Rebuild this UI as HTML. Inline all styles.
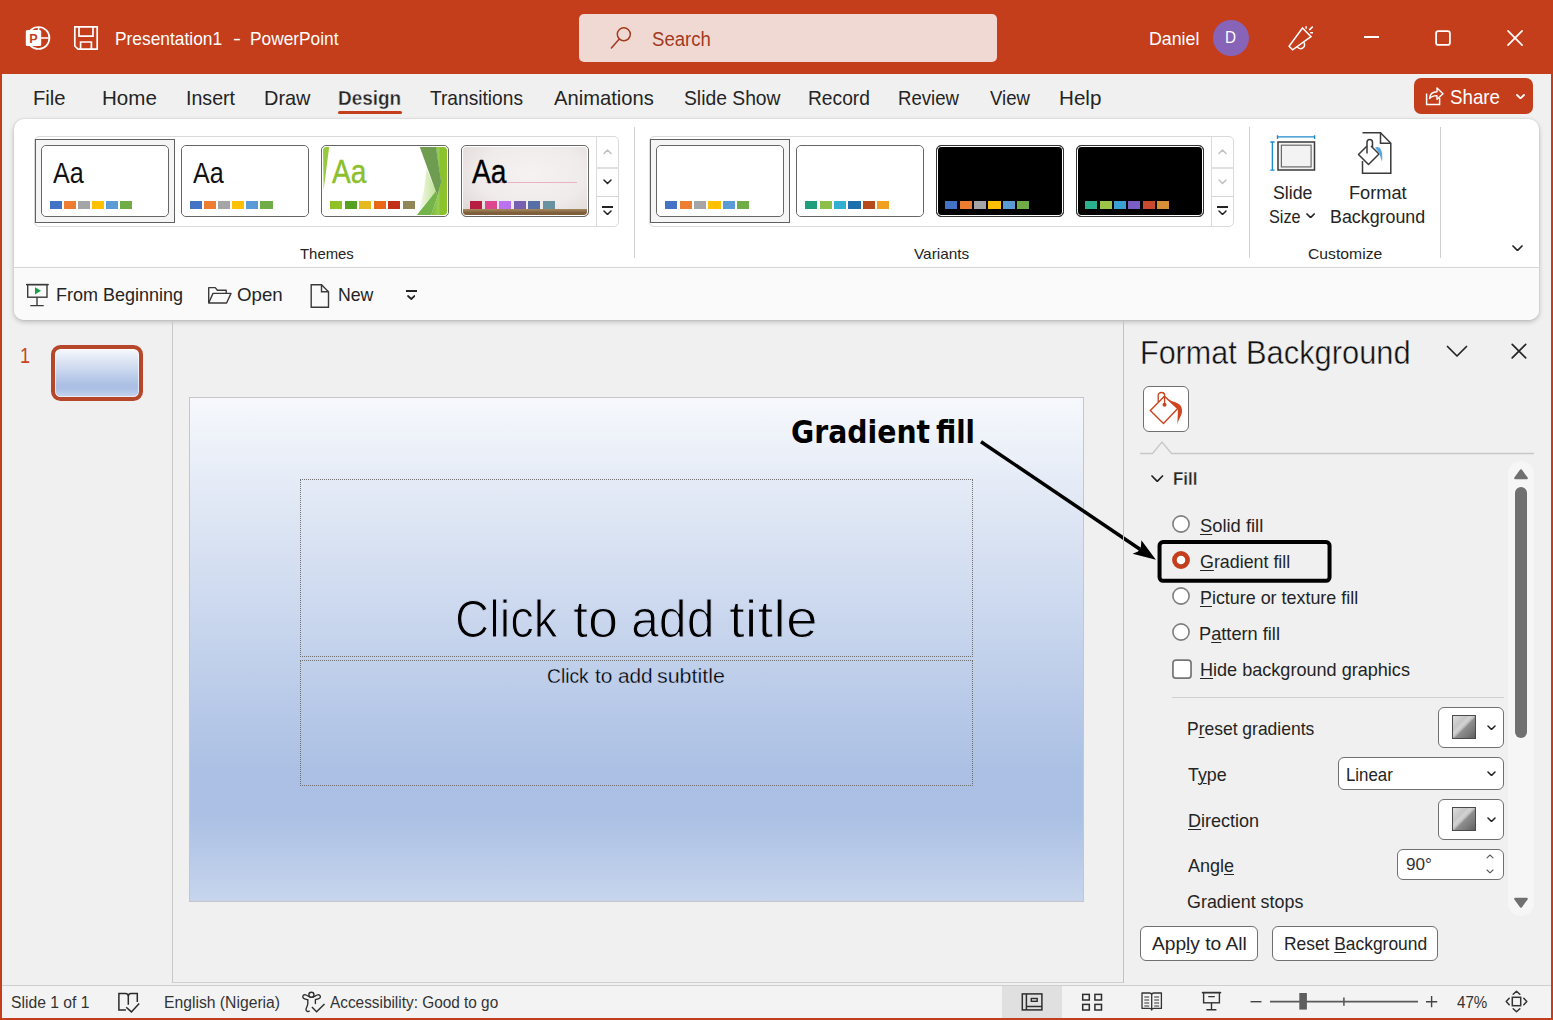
<!DOCTYPE html>
<html lang="en"><head><meta charset="utf-8"><title>Presentation1 - PowerPoint</title>
<style>
html,body{margin:0;padding:0;}
body{width:1553px;height:1020px;overflow:hidden;background:#F0F0F0;font-family:"Liberation Sans",sans-serif;}
#app{position:relative;width:1553px;height:1020px;overflow:hidden;background:#F0F0F0;}
#app div,#app span,#app svg{box-sizing:border-box;}
u{text-decoration:underline;text-decoration-thickness:1px;text-underline-offset:2px;}

</style></head>
<body>
<div id="app">
<div style="position:absolute;left:0px;top:0px;width:1553px;height:74px;background:#C43E1C;"></div>
<svg style="position:absolute;left:25px;top:25px;" width="26" height="26" viewBox="0 0 26 26">
<circle cx="13.4" cy="13" r="11" fill="none" stroke="#fff" stroke-width="1.7"/>
<path d="M13.6 2V13H24.4" fill="none" stroke="#fff" stroke-width="1.7"/>
<rect x="0.8" y="5" width="15.4" height="16" rx="1.6" fill="#fff"/>
<text x="8.5" y="18" font-family="Liberation Sans, sans-serif" font-weight="700" font-size="12.6" text-anchor="middle" fill="#C43E1C">P</text>
</svg>
<svg style="position:absolute;left:73px;top:25px;" width="26" height="26" viewBox="0 0 26 26">
<path d="M1.8 1.8H24.2V24.2H5L1.8 21Z" fill="none" stroke="#fff" stroke-width="1.7" stroke-linejoin="miter"/>
<path d="M6 1.8V11.2H20V1.8" fill="none" stroke="#fff" stroke-width="1.7"/>
<path d="M7.6 24.2V17H18.4V24.2" fill="none" stroke="#fff" stroke-width="1.7"/>
</svg>
<span id="t1" style="position:absolute;left:115.05px;top:30.00px;font:400 18.2px/18.2px 'Liberation Sans', sans-serif;color:#fff;white-space:pre;transform-origin:0 0;transform:scaleX(0.9545);">Presentation1</span>
<span id="t2" style="position:absolute;left:232.70px;top:30.00px;font:400 18.2px/18.2px 'Liberation Sans', sans-serif;color:#fff;white-space:pre;transform-origin:0 0;transform:scaleX(1.3000);">-</span>
<span id="t3" style="position:absolute;left:249.85px;top:30.00px;font:400 18.2px/18.2px 'Liberation Sans', sans-serif;color:#fff;white-space:pre;transform-origin:0 0;transform:scaleX(0.9511);">PowerPoint</span>
<div style="position:absolute;left:579px;top:14px;width:418px;height:48px;background:#F0D9D3;border-radius:5px;"></div>
<svg style="position:absolute;left:606px;top:24px;" width="28" height="28" viewBox="0 0 28 28"><circle cx="17.8" cy="10.3" r="6.5" fill="none" stroke="#A33A1E" stroke-width="1.5"/><path d="M13.3 15.1L5.4 24" stroke="#A33A1E" stroke-width="1.5" stroke-linecap="round"/></svg>
<span id="t4" style="position:absolute;left:651.84px;top:30.00px;font:400 19.4px/19.4px 'Liberation Sans', sans-serif;color:#A33A1E;white-space:pre;transform-origin:0 0;transform:scaleX(0.9593);">Search</span>
<span id="t5" style="position:absolute;left:1149.05px;top:30.00px;font:400 18.7px/18.7px 'Liberation Sans', sans-serif;color:#fff;white-space:pre;transform-origin:0 0;transform:scaleX(0.9510);">Daniel</span>
<div style="position:absolute;left:1213px;top:20px;width:36px;height:36px;background:#8764B8;border-radius:50%;"></div>
<span id="t6" style="position:absolute;left:1224.82px;top:30.00px;font:400 15.6px/15.6px 'Liberation Sans', sans-serif;color:#fff;white-space:pre;transform-origin:0 0;transform:scaleX(0.9800);">D</span>
<svg style="position:absolute;left:1286px;top:24px;" width="30" height="30" viewBox="0 0 30 30">
<path d="M16.5 4L25 12.6L6.6 25.8L3.1 22.2Z" fill="none" stroke="#fff" stroke-width="1.5" stroke-linejoin="miter"/>
<path d="M11.2 22.9A3.9 3.9 0 0 0 17.9 18.3" fill="none" stroke="#fff" stroke-width="1.5"/>
<path d="M20.1 2.3V4.7M23.2 6.1L26.7 2.6M24.2 8.8H27" stroke="#fff" stroke-width="1.5"/>
</svg>
<div style="position:absolute;left:1363.5px;top:36.2px;width:15.5px;height:1.6px;background:#fff;"></div>
<svg style="position:absolute;left:1433px;top:28px;" width="20" height="20" viewBox="0 0 20 20"><rect x="3.1" y="3.1" width="13.8" height="13.8" rx="2.2" fill="none" stroke="#fff" stroke-width="1.8"/></svg>
<svg style="position:absolute;left:1506px;top:29px;" width="18" height="18" viewBox="0 0 18 18"><path d="M2 1.9L16.1 16.1M16.1 1.9L2 16.1" stroke="#fff" stroke-width="1.7" stroke-linecap="round"/></svg>
<span id="t7" style="position:absolute;left:32.66px;top:89.00px;font:400 19.8px/19.8px 'Liberation Sans', sans-serif;color:#242424;white-space:pre;transform-origin:0 0;transform:scaleX(1.0207);">File</span>
<span id="t8" style="position:absolute;left:101.62px;top:89.00px;font:400 19.8px/19.8px 'Liberation Sans', sans-serif;color:#242424;white-space:pre;transform-origin:0 0;transform:scaleX(1.0400);">Home</span>
<span id="t9" style="position:absolute;left:185.72px;top:89.00px;font:400 19.8px/19.8px 'Liberation Sans', sans-serif;color:#242424;white-space:pre;transform-origin:0 0;transform:scaleX(0.9915);">Insert</span>
<span id="t10" style="position:absolute;left:263.99px;top:89.00px;font:400 19.8px/19.8px 'Liberation Sans', sans-serif;color:#242424;white-space:pre;transform-origin:0 0;transform:scaleX(1.0068);">Draw</span>
<span id="t11" style="position:absolute;left:430.30px;top:89.00px;font:400 19.8px/19.8px 'Liberation Sans', sans-serif;color:#242424;white-space:pre;transform-origin:0 0;transform:scaleX(0.9684);">Transitions</span>
<span id="t12" style="position:absolute;left:554.20px;top:89.00px;font:400 19.8px/19.8px 'Liberation Sans', sans-serif;color:#242424;white-space:pre;transform-origin:0 0;transform:scaleX(1.0196);">Animations</span>
<span id="t13" style="position:absolute;left:683.52px;top:89.00px;font:400 19.8px/19.8px 'Liberation Sans', sans-serif;color:#242424;white-space:pre;transform-origin:0 0;transform:scaleX(0.9755);">Slide Show</span>
<span id="t14" style="position:absolute;left:807.86px;top:89.00px;font:400 19.8px/19.8px 'Liberation Sans', sans-serif;color:#242424;white-space:pre;transform-origin:0 0;transform:scaleX(0.9705);">Record</span>
<span id="t15" style="position:absolute;left:897.82px;top:89.00px;font:400 19.8px/19.8px 'Liberation Sans', sans-serif;color:#242424;white-space:pre;transform-origin:0 0;transform:scaleX(0.9397);">Review</span>
<span id="t16" style="position:absolute;left:989.60px;top:89.00px;font:400 19.8px/19.8px 'Liberation Sans', sans-serif;color:#242424;white-space:pre;transform-origin:0 0;transform:scaleX(0.9395);">View</span>
<span id="t17" style="position:absolute;left:1058.62px;top:89.00px;font:400 19.8px/19.8px 'Liberation Sans', sans-serif;color:#242424;white-space:pre;transform-origin:0 0;transform:scaleX(1.0421);">Help</span>
<span id="t18" style="position:absolute;left:338.04px;top:89.00px;font:700 19.8px/19.8px 'Liberation Sans', sans-serif;color:#242424;white-space:pre;transform-origin:0 0;transform:scaleX(0.9578);-webkit-text-stroke:0.35px #F0F0F0;">Design</span>
<div style="position:absolute;left:338px;top:111px;width:64px;height:3px;background:#C43E1C;border-radius:2px;"></div>
<div style="position:absolute;left:1414px;top:78px;width:119px;height:36px;background:#C43E1C;border-radius:7px;"></div>
<svg style="position:absolute;left:1425px;top:86px;" width="20" height="20" viewBox="0 0 20 20">
<path d="M1.6 7.5V18.4H14.6V12" fill="none" stroke="#fff" stroke-width="1.5"/>
<path d="M4.5 12.5C5 7.5 8.5 5.8 12 5.8V2L18 7.8L12 13.2V9.6C9 9.6 6.5 10.2 4.5 12.5Z" fill="none" stroke="#fff" stroke-width="1.4" stroke-linejoin="round"/>
</svg>
<span id="t19" style="position:absolute;left:1449.75px;top:88.00px;font:400 19.8px/19.8px 'Liberation Sans', sans-serif;color:#fff;white-space:pre;transform-origin:0 0;transform:scaleX(0.9471);">Share</span>
<svg style="position:absolute;left:1515.8px;top:93.89999999999999px;" width="9" height="5.4" viewBox="0 0 9 5.4"><path d="M1 1L4.5 4.4L8 1" fill="none" stroke="#fff" stroke-width="1.8" stroke-linecap="round" stroke-linejoin="round"/></svg>
<div style="position:absolute;left:14px;top:119px;width:1525px;height:201px;background:#fff;border-radius:10px;box-shadow:0 2px 5px rgba(0,0,0,0.22),0 0 2px rgba(0,0,0,0.12);overflow:hidden;"><div style="position:absolute;left:0;top:148px;width:1525px;height:53px;background:#FAFAFA;border-top:1px solid #D6D6D6;"></div></div>
<div style="position:absolute;left:34px;top:136px;width:584.5px;height:90.5px;border:1px solid #DADADA;border-radius:5px;"></div>
<div style="position:absolute;left:596px;top:137px;width:1px;height:89px;background:#DADADA;"></div>
<div style="position:absolute;left:596px;top:167px;width:22.5px;height:2px;background:#E0E0E0;"></div>
<div style="position:absolute;left:596px;top:196px;width:22.5px;height:1px;background:#D4D4D4;"></div>
<div style="position:absolute;left:35px;top:139px;width:140px;height:84px;border:1px solid #616161;background:#F5F5F5;"></div>
<div style="position:absolute;left:41px;top:145px;width:128px;height:72px;background:#fff;border:1px solid #666;border-radius:5px;overflow:hidden;"><div style="position:absolute;left:0;top:0;right:0;bottom:0;border:1px solid #fff;border-radius:4px;"></div></div>
<div style="position:absolute;left:181px;top:145px;width:128px;height:72px;background:#fff;border:1px solid #666;border-radius:5px;overflow:hidden;"><div style="position:absolute;left:0;top:0;right:0;bottom:0;border:1px solid #fff;border-radius:4px;"></div></div>
<span id="t20" style="position:absolute;left:52.60px;top:159.00px;font:400 29px/29px 'Liberation Sans', sans-serif;color:#111;white-space:pre;transform-origin:0 0;transform:scaleX(0.8639);">Aa</span>
<span id="t21" style="position:absolute;left:192.60px;top:159.00px;font:400 29px/29px 'Liberation Sans', sans-serif;color:#111;white-space:pre;transform-origin:0 0;transform:scaleX(0.8639);">Aa</span>
<div style="position:absolute;left:49.8px;top:201.3px;width:12.2px;height:7.4px;background:#4472C4;"></div>
<div style="position:absolute;left:63.9px;top:201.3px;width:12.2px;height:7.4px;background:#ED7D31;"></div>
<div style="position:absolute;left:78.0px;top:201.3px;width:12.2px;height:7.4px;background:#A5A5A5;"></div>
<div style="position:absolute;left:92.1px;top:201.3px;width:12.2px;height:7.4px;background:#FFC000;"></div>
<div style="position:absolute;left:106.2px;top:201.3px;width:12.2px;height:7.4px;background:#5B9BD5;"></div>
<div style="position:absolute;left:120.3px;top:201.3px;width:12.2px;height:7.4px;background:#70AD47;"></div>
<div style="position:absolute;left:189.9px;top:201.3px;width:12.2px;height:7.4px;background:#4472C4;"></div>
<div style="position:absolute;left:204.0px;top:201.3px;width:12.2px;height:7.4px;background:#ED7D31;"></div>
<div style="position:absolute;left:218.1px;top:201.3px;width:12.2px;height:7.4px;background:#A5A5A5;"></div>
<div style="position:absolute;left:232.2px;top:201.3px;width:12.2px;height:7.4px;background:#FFC000;"></div>
<div style="position:absolute;left:246.3px;top:201.3px;width:12.2px;height:7.4px;background:#5B9BD5;"></div>
<div style="position:absolute;left:260.4px;top:201.3px;width:12.2px;height:7.4px;background:#70AD47;"></div>
<div style="position:absolute;left:321px;top:145px;width:128px;height:72px;background:#fff;border:1px solid #666;border-radius:5px;overflow:hidden;"><svg width="126" height="70" viewBox="0 0 126 70" style="position:absolute;left:0;top:0">
<defs><linearGradient id="pale" x1="0" x2="1" y1="0" y2="0"><stop offset="0" stop-color="#F4FAEA"/><stop offset="1" stop-color="#C3E198"/></linearGradient>
<linearGradient id="brt" x1="0" x2="1" y1="0" y2="0"><stop offset="0" stop-color="#7FB83A"/><stop offset="0.45" stop-color="#97CB56"/><stop offset="0.6" stop-color="#8AC22C"/><stop offset="1" stop-color="#8DC42E"/></linearGradient></defs>
<path d="M1 1H7.2L1.6 44Z" fill="#97C93F"/>
<path d="M104.5 23L114 45.2L97 65L102 44Z" fill="url(#pale)"/>
<path d="M113.8 1H125V69H109.3L115.6 49.7L119 36Z" fill="url(#brt)"/>
<path d="M97.8 1H114L119.2 36L115.6 49.7L113.8 45.2Z" fill="#6E9C50"/>
<path d="M94.9 69L113.8 45.2L115.6 49.7L109.3 69Z" fill="#74B44A"/>
</svg><div style="position:absolute;left:0;top:0;right:0;bottom:0;border:1px solid #fff;border-radius:4px;"></div></div>
<span id="t22" style="position:absolute;left:332.20px;top:155.00px;font:400 33px/33px 'Liberation Sans', sans-serif;color:#8BC02A;white-space:pre;transform-origin:0 0;transform:scaleX(0.8512);-webkit-text-stroke:0.4px #8BC02A;">Aa</span>
<div style="position:absolute;left:330.0px;top:201.3px;width:12.2px;height:7.4px;background:#90C226;"></div>
<div style="position:absolute;left:344.5px;top:201.3px;width:12.2px;height:7.4px;background:#54A021;"></div>
<div style="position:absolute;left:359.0px;top:201.3px;width:12.2px;height:7.4px;background:#E6B91E;"></div>
<div style="position:absolute;left:373.5px;top:201.3px;width:12.2px;height:7.4px;background:#E76618;"></div>
<div style="position:absolute;left:388.0px;top:201.3px;width:12.2px;height:7.4px;background:#C42F1A;"></div>
<div style="position:absolute;left:402.5px;top:201.3px;width:12.2px;height:7.4px;background:#918655;"></div>
<div style="position:absolute;left:461px;top:145px;width:128px;height:72px;background:radial-gradient(ellipse at 55% 40%, #F5F2F1 0%, #EFEBEA 55%, #DCD3D3 100%);border:1px solid #666;border-radius:5px;overflow:hidden;">
<div style="position:absolute;left:24px;top:35.5px;width:91px;height:1px;background:#E9B3C6;"></div>
<div style="position:absolute;left:0;top:63px;width:128px;height:9px;background:linear-gradient(180deg,#A78A60 0%,#7B5B38 45%,#8F6F48 100%);"></div><div style="position:absolute;left:0;top:0;right:0;bottom:0;border:1px solid #fff;border-radius:4px;"></div></div>
<span id="t23" style="position:absolute;left:472.20px;top:155.00px;font:400 33px/33px 'Liberation Sans', sans-serif;color:#000;white-space:pre;transform-origin:0 0;transform:scaleX(0.8537);-webkit-text-stroke:0.3px #000;">Aa</span>
<div style="position:absolute;left:470.0px;top:201.3px;width:12.2px;height:7.4px;background:#B71E42;"></div>
<div style="position:absolute;left:484.5px;top:201.3px;width:12.2px;height:7.4px;background:#DE478E;"></div>
<div style="position:absolute;left:499.0px;top:201.3px;width:12.2px;height:7.4px;background:#BC72F0;"></div>
<div style="position:absolute;left:513.5px;top:201.3px;width:12.2px;height:7.4px;background:#795FAF;"></div>
<div style="position:absolute;left:528.0px;top:201.3px;width:12.2px;height:7.4px;background:#586EA6;"></div>
<div style="position:absolute;left:542.5px;top:201.3px;width:12.2px;height:7.4px;background:#6892A0;"></div>
<svg style="position:absolute;left:603.0px;top:149.25px;" width="9" height="5.5" viewBox="0 0 9 5.5"><path d="M1 4.5L4.5 1L8 4.5" fill="none" stroke="#C0C0C0" stroke-width="1.5" stroke-linecap="round" stroke-linejoin="round"/></svg>
<svg style="position:absolute;left:603.0px;top:179.25px;" width="9" height="5.5" viewBox="0 0 9 5.5"><path d="M1 1L4.5 4.5L8 1" fill="none" stroke="#242424" stroke-width="1.5" stroke-linecap="round" stroke-linejoin="round"/></svg>
<div style="position:absolute;left:602px;top:206px;width:11px;height:2px;background:#242424;"></div>
<svg style="position:absolute;left:603.0px;top:209.75px;" width="9" height="5.5" viewBox="0 0 9 5.5"><path d="M1 1L4.5 4.5L8 1" fill="none" stroke="#242424" stroke-width="1.5" stroke-linecap="round" stroke-linejoin="round"/></svg>
<span id="t24" style="position:absolute;left:299.80px;top:246.00px;font:400 15px/15px 'Liberation Sans', sans-serif;color:#242424;white-space:pre;transform-origin:0 0;transform:scaleX(0.9926);">Themes</span>
<div style="position:absolute;left:634px;top:127px;width:1px;height:131px;background:#D1D1D1;"></div>
<div style="position:absolute;left:648.5px;top:136px;width:585.0px;height:90.5px;border:1px solid #DADADA;border-radius:5px;"></div>
<div style="position:absolute;left:1211px;top:137px;width:1px;height:89px;background:#DADADA;"></div>
<div style="position:absolute;left:1211px;top:167px;width:22.5px;height:2px;background:#E0E0E0;"></div>
<div style="position:absolute;left:1211px;top:196px;width:22.5px;height:1px;background:#D4D4D4;"></div>
<div style="position:absolute;left:650px;top:139px;width:140px;height:84px;border:1px solid #616161;background:#F5F5F5;"></div>
<div style="position:absolute;left:656px;top:145px;width:128px;height:72px;background:#fff;border:1px solid #666;border-radius:5px;overflow:hidden;"><div style="position:absolute;left:0;top:0;right:0;bottom:0;border:1px solid #fff;border-radius:4px;"></div></div>
<div style="position:absolute;left:796px;top:145px;width:128px;height:72px;background:#fff;border:1px solid #666;border-radius:5px;overflow:hidden;"><div style="position:absolute;left:0;top:0;right:0;bottom:0;border:1px solid #fff;border-radius:4px;"></div></div>
<div style="position:absolute;left:665.0px;top:201.3px;width:12.2px;height:7.4px;background:#4472C4;"></div>
<div style="position:absolute;left:679.5px;top:201.3px;width:12.2px;height:7.4px;background:#ED7D31;"></div>
<div style="position:absolute;left:693.9px;top:201.3px;width:12.2px;height:7.4px;background:#A5A5A5;"></div>
<div style="position:absolute;left:708.4px;top:201.3px;width:12.2px;height:7.4px;background:#FFC000;"></div>
<div style="position:absolute;left:722.8px;top:201.3px;width:12.2px;height:7.4px;background:#5B9BD5;"></div>
<div style="position:absolute;left:737.2px;top:201.3px;width:12.2px;height:7.4px;background:#70AD47;"></div>
<div style="position:absolute;left:805.0px;top:201.3px;width:12.2px;height:7.4px;background:#1E9E7A;"></div>
<div style="position:absolute;left:819.5px;top:201.3px;width:12.2px;height:7.4px;background:#8CC04A;"></div>
<div style="position:absolute;left:833.9px;top:201.3px;width:12.2px;height:7.4px;background:#33AED1;"></div>
<div style="position:absolute;left:848.4px;top:201.3px;width:12.2px;height:7.4px;background:#1C6EAD;"></div>
<div style="position:absolute;left:862.8px;top:201.3px;width:12.2px;height:7.4px;background:#B54A1A;"></div>
<div style="position:absolute;left:877.2px;top:201.3px;width:12.2px;height:7.4px;background:#F0A01E;"></div>
<div style="position:absolute;left:936px;top:145px;width:128px;height:72px;background:#000;border:1px solid #333;border-radius:5px;overflow:hidden;"><div style="position:absolute;left:0;top:0;right:0;bottom:0;border:1px solid #fff;border-radius:4px;"></div></div>
<div style="position:absolute;left:1076px;top:145px;width:128px;height:72px;background:#000;border:1px solid #333;border-radius:5px;overflow:hidden;"><div style="position:absolute;left:0;top:0;right:0;bottom:0;border:1px solid #fff;border-radius:4px;"></div></div>
<div style="position:absolute;left:945.0px;top:201.3px;width:12.2px;height:7.4px;background:#4472C4;"></div>
<div style="position:absolute;left:959.5px;top:201.3px;width:12.2px;height:7.4px;background:#ED7D31;"></div>
<div style="position:absolute;left:973.9px;top:201.3px;width:12.2px;height:7.4px;background:#A5A5A5;"></div>
<div style="position:absolute;left:988.4px;top:201.3px;width:12.2px;height:7.4px;background:#FFC000;"></div>
<div style="position:absolute;left:1002.8px;top:201.3px;width:12.2px;height:7.4px;background:#5B9BD5;"></div>
<div style="position:absolute;left:1017.2px;top:201.3px;width:12.2px;height:7.4px;background:#70AD47;"></div>
<div style="position:absolute;left:1085.0px;top:201.3px;width:12.2px;height:7.4px;background:#2AB08D;"></div>
<div style="position:absolute;left:1099.5px;top:201.3px;width:12.2px;height:7.4px;background:#9BC348;"></div>
<div style="position:absolute;left:1113.9px;top:201.3px;width:12.2px;height:7.4px;background:#3B9FD3;"></div>
<div style="position:absolute;left:1128.3px;top:201.3px;width:12.2px;height:7.4px;background:#7B5FC7;"></div>
<div style="position:absolute;left:1142.8px;top:201.3px;width:12.2px;height:7.4px;background:#C94A2E;"></div>
<div style="position:absolute;left:1157.2px;top:201.3px;width:12.2px;height:7.4px;background:#D99034;"></div>
<svg style="position:absolute;left:1218.0px;top:149.25px;" width="9" height="5.5" viewBox="0 0 9 5.5"><path d="M1 4.5L4.5 1L8 4.5" fill="none" stroke="#C0C0C0" stroke-width="1.5" stroke-linecap="round" stroke-linejoin="round"/></svg>
<svg style="position:absolute;left:1218.0px;top:179.25px;" width="9" height="5.5" viewBox="0 0 9 5.5"><path d="M1 1L4.5 4.5L8 1" fill="none" stroke="#C0C0C0" stroke-width="1.5" stroke-linecap="round" stroke-linejoin="round"/></svg>
<div style="position:absolute;left:1217px;top:206px;width:11px;height:2px;background:#242424;"></div>
<svg style="position:absolute;left:1218.0px;top:209.75px;" width="9" height="5.5" viewBox="0 0 9 5.5"><path d="M1 1L4.5 4.5L8 1" fill="none" stroke="#242424" stroke-width="1.5" stroke-linecap="round" stroke-linejoin="round"/></svg>
<span id="t25" style="position:absolute;left:913.90px;top:246.00px;font:400 15px/15px 'Liberation Sans', sans-serif;color:#242424;white-space:pre;transform-origin:0 0;transform:scaleX(1.0259);">Variants</span>
<div style="position:absolute;left:1249px;top:127px;width:1px;height:131px;background:#D1D1D1;"></div>
<div style="position:absolute;left:1440px;top:127px;width:1px;height:131px;background:#D1D1D1;"></div>
<svg style="position:absolute;left:1268px;top:131px;" width="50" height="44" viewBox="0 0 50 44">
<path d="M9.5 5.9H46.6M9.5 4.2V8.1M46.6 4.2V8.1" stroke="#1E8BCD" stroke-width="1.4" fill="none"/>
<path d="M4.4 11V39M2.3 11H6.6M2.3 39.1H6.6" stroke="#1E8BCD" stroke-width="1.4" fill="none"/>
<rect x="10" y="11" width="36.5" height="28" fill="#F3F3F3" stroke="#3A3A3A" stroke-width="1.5"/>
<rect x="13.4" y="14.2" width="29.7" height="21.7" fill="none" stroke="#6A6A6A" stroke-width="1.2"/>
</svg>
<span id="t26" style="position:absolute;left:1273.05px;top:184.00px;font:400 18.7px/18.7px 'Liberation Sans', sans-serif;color:#242424;white-space:pre;transform-origin:0 0;transform:scaleX(0.9500);">Slide</span>
<span id="t27" style="position:absolute;left:1268.63px;top:208.00px;font:400 18.7px/18.7px 'Liberation Sans', sans-serif;color:#242424;white-space:pre;transform-origin:0 0;transform:scaleX(0.8714);">Size</span>
<svg style="position:absolute;left:1305.6000000000001px;top:212.79999999999998px;" width="9.2" height="5.6" viewBox="0 0 9.2 5.6"><path d="M1 1L4.6 4.6L8.2 1" fill="none" stroke="#242424" stroke-width="1.7" stroke-linecap="round" stroke-linejoin="round"/></svg>
<svg style="position:absolute;left:1354px;top:129px;" width="42" height="48" viewBox="0 0 42 48">
<path d="M8.5 3.8H26.5L36.8 14.2V44.2H8.5V32" fill="none" stroke="#3A3A3A" stroke-width="1.5" stroke-linejoin="miter"/>
<path d="M26.5 3.8V14.2H36.8" fill="none" stroke="#3A3A3A" stroke-width="1.5"/>
<path d="M13 17L4.5 25.5L14.5 35.5L25 25L17 17" fill="#fff" stroke="#3A3A3A" stroke-width="1.5" stroke-linejoin="round"/>
<path d="M13 24V13.5C13 9.5 18.5 9.5 18.5 13.5V17.5" fill="none" stroke="#3A3A3A" stroke-width="1.5" stroke-linecap="round"/>
<path d="M21 18.5C25.5 16.5 29.5 20 28 33C26.5 27.5 25.5 24 21 18.5Z" fill="#5BA7E0"/>
</svg>
<span id="t28" style="position:absolute;left:1348.53px;top:184.00px;font:400 18.7px/18.7px 'Liberation Sans', sans-serif;color:#242424;white-space:pre;transform-origin:0 0;transform:scaleX(0.9741);">Format</span>
<span id="t29" style="position:absolute;left:1329.55px;top:208.00px;font:400 18.7px/18.7px 'Liberation Sans', sans-serif;color:#242424;white-space:pre;transform-origin:0 0;transform:scaleX(0.9541);">Background</span>
<span id="t30" style="position:absolute;left:1307.65px;top:246.00px;font:400 15px/15px 'Liberation Sans', sans-serif;color:#242424;white-space:pre;transform-origin:0 0;transform:scaleX(1.0478);">Customize</span>
<svg style="position:absolute;left:1512.0px;top:244.75px;" width="11" height="6.5" viewBox="0 0 11 6.5"><path d="M1 1L5.5 5.5L10 1" fill="none" stroke="#242424" stroke-width="1.7" stroke-linecap="round" stroke-linejoin="round"/></svg>
<svg style="position:absolute;left:25px;top:283px;" width="25" height="25" viewBox="0 0 25 25">
<path d="M1 1.6H23.8" stroke="#3A3A3A" stroke-width="1.4"/>
<rect x="2.7" y="1.6" width="19.3" height="12.6" fill="none" stroke="#3A3A3A" stroke-width="1.4"/>
<path d="M12 14.2V22.6M5.3 22.6H18.7" stroke="#3A3A3A" stroke-width="1.4" fill="none"/>
<path d="M10 4.3L16 7.8L10 11.4Z" fill="#1E9E4A"/>
</svg>
<span id="t31" style="position:absolute;left:55.73px;top:286.00px;font:400 18.5px/18.5px 'Liberation Sans', sans-serif;color:#242424;white-space:pre;transform-origin:0 0;transform:scaleX(0.9727);">From Beginning</span>
<svg style="position:absolute;left:207px;top:285px;" width="26" height="20" viewBox="0 0 26 20">
<path d="M1.7 18V2.6H8.2L10.4 5.2H19.2V8.4" fill="none" stroke="#3A3A3A" stroke-width="1.4" stroke-linejoin="round"/>
<path d="M1.7 18L6 8.4H24L19.6 18Z" fill="none" stroke="#3A3A3A" stroke-width="1.4" stroke-linejoin="round"/>
</svg>
<span id="t32" style="position:absolute;left:237.39px;top:286.00px;font:400 18.5px/18.5px 'Liberation Sans', sans-serif;color:#242424;white-space:pre;transform-origin:0 0;transform:scaleX(1.0093);">Open</span>
<svg style="position:absolute;left:309px;top:283px;" width="22" height="26" viewBox="0 0 22 26">
<path d="M2.2 1.8H12.5L19.5 8.8V24.2H2.2Z" fill="none" stroke="#3A3A3A" stroke-width="1.4" stroke-linejoin="miter"/>
<path d="M12.5 1.8V8.8H19.5" fill="none" stroke="#3A3A3A" stroke-width="1.4"/>
</svg>
<span id="t33" style="position:absolute;left:337.54px;top:286.00px;font:400 18.5px/18.5px 'Liberation Sans', sans-serif;color:#242424;white-space:pre;transform-origin:0 0;transform:scaleX(0.9556);">New</span>
<div style="position:absolute;left:406px;top:290px;width:10.6px;height:1.8px;background:#242424;"></div>
<svg style="position:absolute;left:406.9px;top:294.5px;" width="8.6" height="5" viewBox="0 0 8.6 5"><path d="M1 1L4.3 4L7.6 1" fill="none" stroke="#242424" stroke-width="1.7" stroke-linecap="round" stroke-linejoin="round"/></svg>
<div style="position:absolute;left:172px;top:321px;width:1px;height:662px;background:#C8C8C8;"></div>
<span id="t34" style="position:absolute;left:19.80px;top:344.00px;font:400 22.8px/22.8px 'Liberation Sans', sans-serif;color:#C9431F;white-space:pre;transform-origin:0 0;transform:scaleX(0.8000);">1</span>
<div style="position:absolute;left:51px;top:345px;width:92px;height:56px;border:4px solid #B7472A;border-radius:9.5px;background:linear-gradient(180deg,#F6F8FC 0%,#ABC0E4 74%,#ABC0E4 83%,#C7D5ED 100%);box-shadow:inset 0 0 0 0.8px rgba(255,255,255,0.8);"></div>
<div style="position:absolute;left:173px;top:982px;width:951px;height:1px;background:#D0D0D0;"></div>
<div style="position:absolute;left:189px;top:397px;width:895px;height:505px;border:1px solid #C6C6C6;background:linear-gradient(180deg,#F6F8FC 0%,#ABC0E4 74%,#ABC0E4 83%,#C7D5ED 100%);"></div>
<div style="position:absolute;left:300px;top:479px;width:673px;height:178px;border:1px dotted #707070;"></div>
<div style="position:absolute;left:300px;top:660px;width:673px;height:126px;border:1px dotted #707070;"></div>
<span id="t35" style="position:absolute;left:455.22px;top:594.00px;font:400 51px/51px 'Liberation Sans', sans-serif;color:#000;white-space:pre;transform-origin:0 0;transform:scaleX(0.9271);-webkit-text-stroke:1.1px #C9D6EE;">Click</span>
<span id="t36" style="position:absolute;left:572.84px;top:594.00px;font:400 51px/51px 'Liberation Sans', sans-serif;color:#000;white-space:pre;transform-origin:0 0;transform:scaleX(1.0625);-webkit-text-stroke:1.1px #C9D6EE;">to</span>
<span id="t37" style="position:absolute;left:631.24px;top:594.00px;font:400 51px/51px 'Liberation Sans', sans-serif;color:#000;white-space:pre;transform-origin:0 0;transform:scaleX(0.9812);-webkit-text-stroke:1.1px #C9D6EE;">add</span>
<span id="t38" style="position:absolute;left:728.68px;top:594.00px;font:400 51px/51px 'Liberation Sans', sans-serif;color:#000;white-space:pre;transform-origin:0 0;transform:scaleX(1.1184);-webkit-text-stroke:1.1px #C9D6EE;">title</span>
<span id="t39" style="position:absolute;left:547.24px;top:666.00px;font:400 20px/20px 'Liberation Sans', sans-serif;color:#000;white-space:pre;transform-origin:0 0;transform:scaleX(0.9619);-webkit-text-stroke:0.3px #BECEEA;">Click</span>
<span id="t40" style="position:absolute;left:595.30px;top:666.00px;font:400 20px/20px 'Liberation Sans', sans-serif;color:#000;white-space:pre;transform-origin:0 0;transform:scaleX(1.0438);-webkit-text-stroke:0.3px #BECEEA;">to</span>
<span id="t41" style="position:absolute;left:617.96px;top:666.00px;font:400 20px/20px 'Liberation Sans', sans-serif;color:#000;white-space:pre;transform-origin:0 0;transform:scaleX(1.0387);-webkit-text-stroke:0.3px #BECEEA;">add</span>
<span id="t42" style="position:absolute;left:657.13px;top:666.00px;font:400 20px/20px 'Liberation Sans', sans-serif;color:#000;white-space:pre;transform-origin:0 0;transform:scaleX(1.0710);-webkit-text-stroke:0.3px #BECEEA;">subtitle</span>
<span id="t43" style="position:absolute;left:790.70px;top:417.00px;font:700 31.5px/31.5px 'DejaVu Sans', 'Liberation Sans', sans-serif;color:#000;white-space:pre;transform-origin:0 0;transform:scaleX(0.8980);">Gradient</span>
<span id="t44" style="position:absolute;left:936.03px;top:417.00px;font:700 31.5px/31.5px 'DejaVu Sans', 'Liberation Sans', sans-serif;color:#000;white-space:pre;transform-origin:0 0;transform:scaleX(0.8667);">fill</span>
<svg style="position:absolute;left:970px;top:430px;" width="200" height="140" viewBox="0 0 200 140">
<path d="M11 11.7L170 119.3" stroke="#000" stroke-width="3.5" fill="none"/>
<path d="M185.9 129.8L171.4 110.2L170.8 117.5L168 121.5L162.6 123.7Z" fill="#000"/>
</svg>
<div style="position:absolute;left:1123px;top:321px;width:1px;height:662px;background:#C2C2C2;"></div>
<span id="t45" style="position:absolute;left:1139.66px;top:336.00px;font:400 33.4px/33.4px 'Liberation Sans', sans-serif;color:#111;white-space:pre;transform-origin:0 0;transform:scaleX(0.9136);-webkit-text-stroke:0.45px #F0F0F0;">Format</span>
<span id="t46" style="position:absolute;left:1245.73px;top:336.00px;font:400 33.4px/33.4px 'Liberation Sans', sans-serif;color:#111;white-space:pre;transform-origin:0 0;transform:scaleX(0.9237);-webkit-text-stroke:0.45px #F0F0F0;">Background</span>
<svg style="position:absolute;left:1446.4px;top:345.2px;" width="22" height="13" viewBox="0 0 22 13"><path d="M1.5 1.5L11 11L20.5 1.5" fill="none" stroke="#242424" stroke-width="1.7" stroke-linecap="round" stroke-linejoin="round"/></svg>
<svg style="position:absolute;left:1510px;top:342px;" width="18" height="18" viewBox="0 0 18 18"><path d="M2.2 2.3L15.7 15.8M15.7 2.3L2.2 15.8" stroke="#242424" stroke-width="1.7" stroke-linecap="round"/></svg>
<div style="position:absolute;left:1143px;top:386px;width:46px;height:46px;background:#fff;border:1px solid #707070;border-radius:6px;"></div>
<svg style="position:absolute;left:1148px;top:391px;" width="36" height="36" viewBox="0 0 36 36">
<path d="M2.3 19.5L16.4 5.2L29.7 17.5L15.5 32.5Z" fill="none" stroke="#C9431F" stroke-width="1.4" stroke-linejoin="miter"/>
<path d="M10.2 11V4.2C10.2 0.6 16.6 0.6 16.6 4.2V13" fill="none" stroke="#C9431F" stroke-width="1.3"/>
<circle cx="16.5" cy="13.7" r="2" fill="#C9431F"/>
<path d="M17 5.5C20 8 22 9.6 25 10.5C30 12 33.6 13.5 34 19C34.3 25 30.5 27 29.5 33.5C29.3 27 30.3 21 29.7 17.5Z" fill="#CF4520"/>
</svg>
<svg style="position:absolute;left:1139px;top:439.2px;" width="396" height="16" viewBox="0 0 396 16"><path d="M1 14.5H13.5L23 3L32.5 14.5H395" fill="none" stroke="#C8C8C8" stroke-width="1.3"/></svg>
<svg style="position:absolute;left:1151.05px;top:474.55px;" width="12.5" height="7.3" viewBox="0 0 12.5 7.3"><path d="M1 1L6.25 6.3L11.5 1" fill="none" stroke="#242424" stroke-width="1.7" stroke-linecap="round" stroke-linejoin="round"/></svg>
<span id="t47" style="position:absolute;left:1173.10px;top:470.00px;font:700 18.7px/18.7px 'Liberation Sans', sans-serif;color:#242424;white-space:pre;transform-origin:0 0;transform:scaleX(0.9040);-webkit-text-stroke:0.3px #F0F0F0;">Fill</span>
<svg style="position:absolute;left:1171px;top:514px;" width="20" height="20" viewBox="0 0 20 20"><circle cx="10" cy="10" r="8.1" fill="#fff" stroke="#7E7E7E" stroke-width="1.6"/></svg>
<svg style="position:absolute;left:1171px;top:550px;" width="20" height="20" viewBox="0 0 20 20"><circle cx="10" cy="10" r="6.6" fill="#fff" stroke="#C43E1C" stroke-width="4.6"/></svg>
<svg style="position:absolute;left:1171px;top:586px;" width="20" height="20" viewBox="0 0 20 20"><circle cx="10" cy="10" r="8.1" fill="#fff" stroke="#7E7E7E" stroke-width="1.6"/></svg>
<svg style="position:absolute;left:1171px;top:622px;" width="20" height="20" viewBox="0 0 20 20"><circle cx="10" cy="10" r="8.1" fill="#fff" stroke="#7E7E7E" stroke-width="1.6"/></svg>
<span id="t48" style="position:absolute;left:1200.30px;top:517.00px;font:400 18.5px/18.5px 'Liberation Sans', sans-serif;color:#242424;white-space:pre;transform-origin:0 0;transform:scaleX(0.9921);"><u>S</u>olid fill</span>
<span id="t49" style="position:absolute;left:1200.30px;top:553.00px;font:400 18.5px/18.5px 'Liberation Sans', sans-serif;color:#242424;white-space:pre;transform-origin:0 0;transform:scaleX(0.9645);"><u>G</u>radient fill</span>
<span id="t50" style="position:absolute;left:1200.30px;top:589.00px;font:400 18.5px/18.5px 'Liberation Sans', sans-serif;color:#242424;white-space:pre;transform-origin:0 0;transform:scaleX(0.9673);"><u>P</u>icture or texture fill</span>
<span id="t51" style="position:absolute;left:1199.32px;top:625.00px;font:400 18.5px/18.5px 'Liberation Sans', sans-serif;color:#242424;white-space:pre;transform-origin:0 0;transform:scaleX(0.9838);">P<u>a</u>ttern fill</span>
<svg style="position:absolute;left:1170px;top:657px;" width="24" height="24" viewBox="0 0 24 24"><rect x="2.95" y="3.05" width="18.1" height="18.1" rx="3" fill="#fff" stroke="#767676" stroke-width="1.7"/></svg>
<span id="t52" style="position:absolute;left:1200.30px;top:661.00px;font:400 18.5px/18.5px 'Liberation Sans', sans-serif;color:#242424;white-space:pre;transform-origin:0 0;transform:scaleX(0.9766);"><u>H</u>ide background graphics</span>
<svg style="position:absolute;left:1155px;top:538px;" width="180" height="48" viewBox="0 0 180 48"><rect x="4.55" y="4.05" width="170" height="38.8" rx="3.5" fill="none" stroke="#000" stroke-width="4"/></svg>
<div style="position:absolute;left:1172px;top:696.5px;width:332px;height:1px;background:#D0D0D0;"></div>
<span id="t53" style="position:absolute;left:1186.76px;top:720.00px;font:400 18.5px/18.5px 'Liberation Sans', sans-serif;color:#242424;white-space:pre;transform-origin:0 0;transform:scaleX(0.9444);">P<u>r</u>eset gradients</span>
<span id="t54" style="position:absolute;left:1187.70px;top:766.00px;font:400 18.5px/18.5px 'Liberation Sans', sans-serif;color:#242424;white-space:pre;transform-origin:0 0;transform:scaleX(0.9615);">T<u>y</u>pe</span>
<span id="t55" style="position:absolute;left:1187.70px;top:812.00px;font:400 18.5px/18.5px 'Liberation Sans', sans-serif;color:#242424;white-space:pre;transform-origin:0 0;transform:scaleX(0.9736);"><u>D</u>irection</span>
<span id="t56" style="position:absolute;left:1187.70px;top:857.00px;font:400 18.5px/18.5px 'Liberation Sans', sans-serif;color:#242424;white-space:pre;transform-origin:0 0;transform:scaleX(0.9723);">Angl<u>e</u></span>
<span id="t57" style="position:absolute;left:1186.73px;top:893.00px;font:400 18.5px/18.5px 'Liberation Sans', sans-serif;color:#242424;white-space:pre;transform-origin:0 0;transform:scaleX(0.9672);">Gradient stops</span>
<div style="position:absolute;left:1438px;top:707px;width:65.5px;height:40.5px;background:#fff;border:1px solid #707070;border-radius:6px;"></div>
<div style="position:absolute;left:1451.8px;top:714.7px;width:24.4px;height:24.2px;border:1.5px solid #4A4A4A;background:linear-gradient(135deg,#DEDEDE 0%,#C6C6C6 30%,#D4D4D4 42%,#C0C0C0 49%,#8E8E8E 55%,#7C7C7C 75%,#5E5E5E 100%);"></div>
<svg style="position:absolute;left:1486.7px;top:724.75px;" width="9" height="5.5" viewBox="0 0 9 5.5"><path d="M1 1L4.5 4.5L8 1" fill="none" stroke="#242424" stroke-width="1.5" stroke-linecap="round" stroke-linejoin="round"/></svg>
<div style="position:absolute;left:1438px;top:799px;width:65.5px;height:40.5px;background:#fff;border:1px solid #707070;border-radius:6px;"></div>
<div style="position:absolute;left:1451.8px;top:806.7px;width:24.4px;height:24.2px;border:1.5px solid #4A4A4A;background:linear-gradient(135deg,#DEDEDE 0%,#C6C6C6 30%,#D4D4D4 42%,#C0C0C0 49%,#8E8E8E 55%,#7C7C7C 75%,#5E5E5E 100%);"></div>
<svg style="position:absolute;left:1486.7px;top:816.75px;" width="9" height="5.5" viewBox="0 0 9 5.5"><path d="M1 1L4.5 4.5L8 1" fill="none" stroke="#242424" stroke-width="1.5" stroke-linecap="round" stroke-linejoin="round"/></svg>
<div style="position:absolute;left:1338px;top:757px;width:165.5px;height:33px;background:#fff;border:1px solid #707070;border-radius:6px;"></div>
<span id="t58" style="position:absolute;left:1345.79px;top:766.00px;font:400 18.5px/18.5px 'Liberation Sans', sans-serif;color:#242424;white-space:pre;transform-origin:0 0;transform:scaleX(0.9100);">Linear</span>
<svg style="position:absolute;left:1486.7px;top:770.75px;" width="9" height="5.5" viewBox="0 0 9 5.5"><path d="M1 1L4.5 4.5L8 1" fill="none" stroke="#242424" stroke-width="1.5" stroke-linecap="round" stroke-linejoin="round"/></svg>
<div style="position:absolute;left:1397px;top:849px;width:106.5px;height:31px;background:#fff;border:1px solid #707070;border-radius:6px;"></div>
<span id="t59" style="position:absolute;left:1405.63px;top:857.00px;font:400 16px/16px 'Liberation Sans', sans-serif;color:#333;white-space:pre;transform-origin:0 0;transform:scaleX(1.0727);">90°</span>
<svg style="position:absolute;left:1486.0px;top:854.4px;" width="8" height="4.8" viewBox="0 0 8 4.8"><path d="M1 3.8L4.0 1L7 3.8" fill="none" stroke="#5A5A5A" stroke-width="1.1" stroke-linecap="round" stroke-linejoin="round"/></svg>
<svg style="position:absolute;left:1486.0px;top:868.8000000000001px;" width="8" height="4.8" viewBox="0 0 8 4.8"><path d="M1 1L4.0 3.8L7 1" fill="none" stroke="#5A5A5A" stroke-width="1.1" stroke-linecap="round" stroke-linejoin="round"/></svg>
<div style="position:absolute;left:1508px;top:461px;width:26px;height:455px;background:#F6F6F6;border-radius:13px;"></div>
<svg style="position:absolute;left:1513px;top:467.6px;" width="16" height="12" viewBox="0 0 16 12"><path d="M8 2.2L13.8 10.2H2.2Z" fill="#707070" stroke="#707070" stroke-width="2" stroke-linejoin="round"/></svg>
<div style="position:absolute;left:1515px;top:487px;width:12.4px;height:251px;background:#707070;border-radius:6.2px;"></div>
<svg style="position:absolute;left:1513px;top:896.6px;" width="16" height="12" viewBox="0 0 16 12"><path d="M2.2 1.8H13.8L8 9.8Z" fill="#707070" stroke="#707070" stroke-width="2" stroke-linejoin="round"/></svg>
<div style="position:absolute;left:1140px;top:925.5px;width:118px;height:35.5px;background:#fff;border:1px solid #707070;border-radius:6px;"></div>
<span id="t60" style="position:absolute;left:1152.00px;top:935.00px;font:400 18.5px/18.5px 'Liberation Sans', sans-serif;color:#242424;white-space:pre;transform-origin:0 0;transform:scaleX(1.0352);">App<u>l</u>y to All</span>
<div style="position:absolute;left:1272px;top:925.5px;width:166px;height:35.5px;background:#fff;border:1px solid #707070;border-radius:6px;"></div>
<span id="t61" style="position:absolute;left:1283.56px;top:935.00px;font:400 18.5px/18.5px 'Liberation Sans', sans-serif;color:#242424;white-space:pre;transform-origin:0 0;transform:scaleX(0.9400);">Reset <u>B</u>ackground</span>
<div style="position:absolute;left:0px;top:985px;width:1553px;height:35px;background:#F3F3F3;border-top:1px solid #CFCFCF;"></div>
<span id="t62" style="position:absolute;left:11.41px;top:995.00px;font:400 15.8px/15.8px 'Liberation Sans', sans-serif;color:#333;white-space:pre;transform-origin:0 0;transform:scaleX(0.9922);">Slide 1 of 1</span>
<svg style="position:absolute;left:117px;top:991px;" width="24" height="23" viewBox="0 0 24 23">
<path d="M8.9 19.1H1.9V2.6H8.4C10.3 2.6 11.3 3.8 11.3 5.5V13.8M11.3 5.5C11.3 3.8 12.3 2.6 14 2.6H20.3V10.9" fill="none" stroke="#2A2A2A" stroke-width="1.5" stroke-linejoin="miter"/>
<path d="M9.2 16.2L14.4 20.9L22.2 12.6" fill="none" stroke="#2A2A2A" stroke-width="1.5"/>
</svg>
<span id="t63" style="position:absolute;left:163.51px;top:995.00px;font:400 15.8px/15.8px 'Liberation Sans', sans-serif;color:#333;white-space:pre;transform-origin:0 0;transform:scaleX(0.9939);">English (Nigeria)</span>
<svg style="position:absolute;left:301px;top:990px;" width="26" height="24" viewBox="0 0 26 24">
<circle cx="10.4" cy="4.8" r="2.55" fill="none" stroke="#2E2E2E" stroke-width="1.35"/>
<path d="M6.8 9.8C4 8.9 1.8 8.7 1.8 6.9C1.8 5 3.6 4.3 5.1 5C6.7 5.8 8.5 7.3 10.4 7.3C12.3 7.3 14.4 5.8 16.2 5C17.8 4.3 19.4 5.2 19.4 6.9C19.4 8.6 16.5 8.8 14.4 9.7V13.6" fill="none" stroke="#2E2E2E" stroke-width="1.35" stroke-linecap="round" stroke-linejoin="round"/>
<path d="M6.8 9.8V13.4C6.8 16 5 17.6 5 19.5C5 21.5 7 21.9 8.3 21.2" fill="none" stroke="#2E2E2E" stroke-width="1.35" stroke-linecap="round" stroke-linejoin="round"/>
<path d="M10.9 17.1L15.6 21.8L23.5 13.9" fill="none" stroke="#2E2E2E" stroke-width="1.45" stroke-linejoin="miter"/>
</svg>
<span id="t64" style="position:absolute;left:329.80px;top:995.00px;font:400 15.8px/15.8px 'Liberation Sans', sans-serif;color:#333;white-space:pre;transform-origin:0 0;transform:scaleX(0.9723);">Accessibility: Good to go</span>
<div style="position:absolute;left:1002px;top:986px;width:60px;height:32px;background:#E0E0E0;"></div>
<svg style="position:absolute;left:1021px;top:992px;" width="23" height="20" viewBox="0 0 23 20">
<rect x="1.3" y="1.9" width="19.6" height="16" fill="none" stroke="#2E2E2E" stroke-width="1.5"/>
<path d="M5.4 1.9V17.9M5.4 14.6H20.9" stroke="#2E2E2E" stroke-width="1.5" fill="none"/>
<rect x="10.3" y="6.5" width="5.9" height="2.8" fill="none" stroke="#2E2E2E" stroke-width="1.4"/>
</svg>
<svg style="position:absolute;left:1081px;top:992px;" width="23" height="20" viewBox="0 0 23 20">
<rect x="1.7" y="2.4" width="6.6" height="5.6" fill="none" stroke="#2E2E2E" stroke-width="1.5"/>
<rect x="13.9" y="2.4" width="6.6" height="5.6" fill="none" stroke="#2E2E2E" stroke-width="1.5"/>
<rect x="1.7" y="12.4" width="6.6" height="5.6" fill="none" stroke="#2E2E2E" stroke-width="1.5"/>
<rect x="13.9" y="12.4" width="6.6" height="5.6" fill="none" stroke="#2E2E2E" stroke-width="1.5"/>
</svg>
<svg style="position:absolute;left:1141px;top:991px;" width="22" height="21" viewBox="0 0 22 21">
<path d="M1 2H8.5C10 2 10.7 2.8 10.7 4V19C10.7 18 10 17.4 8.5 17.4H1Z M20.4 2H13C11.5 2 10.7 2.8 10.7 4V19C10.7 18 11.5 17.4 13 17.4H20.4Z" fill="none" stroke="#333" stroke-width="1.3" stroke-linejoin="round"/>
<path d="M3.3 6H8.2M3.3 9H8.2M3.3 12H8.2M3.3 15H8.2M13.2 6H18.1M13.2 9H18.1M13.2 12H18.1M13.2 15H18.1" stroke="#333" stroke-width="1"/>
</svg>
<svg style="position:absolute;left:1201px;top:991px;" width="21" height="21" viewBox="0 0 21 21">
<path d="M0.8 1.6H20.2" stroke="#333" stroke-width="1.5"/>
<rect x="2.6" y="1.6" width="15.8" height="10.2" fill="none" stroke="#333" stroke-width="1.4"/>
<path d="M7.2 5.6H13.8M10.5 11.8V18.8M5.4 18.8H15.4" stroke="#333" stroke-width="1.4" fill="none"/>
</svg>
<svg style="position:absolute;left:1245px;top:988px;" width="200" height="26" viewBox="0 0 200 26">
<path d="M5.5 13.7H16.5" stroke="#444" stroke-width="1.4"/>
<path d="M25 13.7H173" stroke="#5A5A5A" stroke-width="1.7"/>
<path d="M98.9 9.6V17.8" stroke="#5A5A5A" stroke-width="1.6"/>
<rect x="54.3" y="5" width="7.6" height="16.6" fill="#5E5E5E"/>
<path d="M181 13.7H192.2M186.6 8.1V19.3" stroke="#444" stroke-width="1.4"/>
</svg>
<span id="t65" style="position:absolute;left:1456.50px;top:995.00px;font:400 15.8px/15.8px 'Liberation Sans', sans-serif;color:#333;white-space:pre;transform-origin:0 0;transform:scaleX(0.9581);">47%</span>
<svg style="position:absolute;left:1505px;top:990px;" width="23" height="23" viewBox="0 0 23 23">
<rect x="7.3" y="7.3" width="8.4" height="8.4" fill="none" stroke="#333" stroke-width="1.5"/>
<path d="M8.2 4.2L11.5 1.2L14.8 4.2M8.2 18.8L11.5 21.8L14.8 18.8M4.2 8.2L1.2 11.5L4.2 14.8M18.8 8.2L21.8 11.5L18.8 14.8" fill="none" stroke="#333" stroke-width="1.5" stroke-linecap="round" stroke-linejoin="round"/>
</svg>
<div style="position:absolute;left:0px;top:74px;width:2px;height:946px;background:#C43E1C;"></div>
<div style="position:absolute;left:1551px;top:74px;width:2px;height:946px;background:#C43E1C;"></div>
<div style="position:absolute;left:0px;top:1018px;width:1553px;height:2px;background:#C43E1C;"></div>
</div>
</body></html>
